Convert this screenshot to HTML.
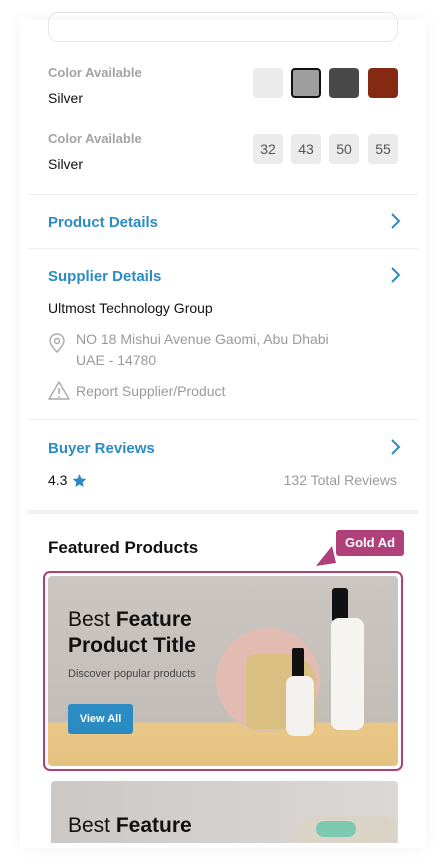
<!DOCTYPE html>
<html><head><meta charset="utf-8"><style>
*{margin:0;padding:0;box-sizing:border-box}
body{width:446px;height:868px;background:#fff;font-family:"Liberation Sans",sans-serif;position:relative;overflow:hidden}
.card{position:absolute;left:20px;top:20px;width:406px;height:828px;background:#fff;box-shadow:0 0 14px rgba(0,0,0,.06)}
.a{position:absolute;white-space:nowrap}
.lbl{color:#a3a3a3;font-size:13px;font-weight:bold}
.val{color:#111;font-size:14px}
.sw{position:absolute;width:30px;height:30px;border-radius:4px;top:68px}
.sz{position:absolute;width:30px;height:30px;border-radius:4px;top:134px;background:#ebebeb;color:#555;font-size:14px;text-align:center;line-height:30px}
.hr{position:absolute;left:28px;width:390px;height:1px;background:#eee}
.h{color:#2b8cc4;font-size:15px;font-weight:bold}
.gr{color:#9a9a9a;font-size:14px}
</style></head><body>
<div class="card"></div>
<div class="a" style="left:48px;top:12px;width:350px;height:30px;border:1px solid #e6e6e6;border-radius:10px"></div>
<div class="a lbl" style="left:48px;top:65px">Color Available</div>
<div class="a val" style="left:48px;top:90px">Silver</div>
<div class="sw" style="left:253px;background:#ebebeb"></div>
<div class="sw" style="left:291px;background:#9e9e9e;border:2px solid #111"></div>
<div class="sw" style="left:329px;background:#484848"></div>
<div class="sw" style="left:368px;background:#842a12"></div>
<div class="a lbl" style="left:48px;top:131px">Color Available</div>
<div class="a val" style="left:48px;top:156px">Silver</div>
<div class="sz" style="left:253px">32</div><div class="sz" style="left:291px">43</div><div class="sz" style="left:329px">50</div><div class="sz" style="left:368px">55</div>
<div class="hr" style="top:194px"></div>
<div class="a h" style="left:48px;top:214px">Product Details</div>
<svg class="a" style="left:388px;top:211px" width="14" height="20"><path d="M4 3l7 7-7 7" fill="none" stroke="#2b8cc4" stroke-width="2"/></svg>
<div class="hr" style="top:248px"></div>
<div class="a h" style="left:48px;top:268px">Supplier Details</div>
<svg class="a" style="left:388px;top:265px" width="14" height="20"><path d="M4 3l7 7-7 7" fill="none" stroke="#2b8cc4" stroke-width="2"/></svg>
<div class="a val" style="left:48px;top:300px">Ultmost Technology Group</div>
<svg class="a" style="left:47px;top:332px" width="20" height="22"><path d="M10 20s-7-7-7-11a7 7 0 0114 0c0 4-7 11-7 11z" fill="none" stroke="#aaa" stroke-width="1.4"/><circle cx="10" cy="9" r="2.5" fill="none" stroke="#aaa" stroke-width="1.4"/></svg>
<div class="a gr" style="left:76px;top:331px">NO 18 Mishui Avenue Gaomi, Abu Dhabi</div>
<div class="a gr" style="left:76px;top:352px">UAE - 14780</div>
<svg class="a" style="left:47px;top:380px" width="24" height="21"><path d="M12 2L2 19h20z" fill="none" stroke="#aaa" stroke-width="1.4" stroke-linejoin="round"/><path d="M12 8v6M12 16v1.5" stroke="#aaa" stroke-width="1.6"/></svg>
<div class="a gr" style="left:76px;top:383px">Report Supplier/Product</div>
<div class="hr" style="top:419px"></div>
<div class="a h" style="left:48px;top:440px">Buyer Reviews</div>
<svg class="a" style="left:388px;top:437px" width="14" height="20"><path d="M4 3l7 7-7 7" fill="none" stroke="#2b8cc4" stroke-width="2"/></svg>
<div class="a val" style="left:48px;top:472px">4.3</div>
<svg class="a" style="left:72px;top:473px" width="15" height="15"><path d="M7.5 1l2 4.5 4.8.5-3.6 3.2 1 4.8-4.2-2.5-4.2 2.5 1-4.8L.7 6l4.8-.5z" fill="#2b8cc4"/></svg>
<div class="a gr" style="right:49px;top:472px">132 Total Reviews</div>
<div class="a" style="left:28px;top:510px;width:390px;height:4px;background:#f0f0f0"></div>
<div class="a" style="left:48px;top:538px;font-size:17px;font-weight:bold;color:#111">Featured Products</div>
<div class="a" style="left:336px;top:530px;width:68px;height:26px;background:#b0407a;border-radius:3px;color:#fff;font-size:13px;font-weight:bold;text-align:center;line-height:26px">Gold Ad</div>
<svg class="a" style="left:314px;top:545px" width="30" height="22"><path d="M18 1L2 21l20-3z" fill="#b0407a"/></svg>
<div class="a" style="left:43px;top:571px;width:360px;height:200px;border:2px solid #b0407a;border-radius:7px"></div>
<div class="a" style="left:48px;top:576px;width:350px;height:190px;border-radius:4px;overflow:hidden;background:linear-gradient(#cbc6c2 0,#c3bdb8 77%,#e8c788 77%,#e6c280 100%)">
 <div class="a" style="left:168px;top:52px;width:104px;height:104px;border-radius:50%;background:#e2bcb3"></div>
 <div class="a" style="left:198px;top:78px;width:70px;height:75px;background:#d9bf82;border-radius:10px 30px 4px 6px"></div>
 <div class="a" style="left:284px;top:12px;width:16px;height:34px;background:#111;border-radius:3px"></div>
 <div class="a" style="left:283px;top:42px;width:33px;height:112px;background:#f5f4f1;border-radius:8px"></div>
 <div class="a" style="left:244px;top:72px;width:12px;height:32px;background:#111;border-radius:2px"></div>
 <div class="a" style="left:238px;top:100px;width:28px;height:60px;background:#f3f2ee;border-radius:8px"></div>
 <div class="a" style="left:20px;top:31px;font-size:21px;color:#111;line-height:26px">Best <b>Feature</b><br><b>Product Title</b></div>
 <div class="a" style="left:20px;top:92px;font-size:11px;color:#444">Discover popular products</div>
 <div class="a" style="left:20px;top:128px;width:65px;height:30px;background:#2b8cc4;border-radius:3px;color:#fff;font-size:11px;font-weight:bold;text-align:center;line-height:30px">View All</div>
</div>
<div class="a" style="left:51px;top:781px;width:347px;height:62px;border-radius:4px 4px 0 0;overflow:hidden;background:linear-gradient(90deg,#ccc8c6,#dbd8d6)">
 <div class="a" style="left:17px;top:33px;font-size:21px;color:#111">Best <b>Feature</b></div>
 <div class="a" style="left:245px;top:35px;width:100px;height:30px;background:#d9d4c6;border-radius:20px 10px 0 0"></div>
 <div class="a" style="left:265px;top:40px;width:40px;height:16px;background:#7cc8b0;border-radius:8px"></div>
</div>
</body></html>
